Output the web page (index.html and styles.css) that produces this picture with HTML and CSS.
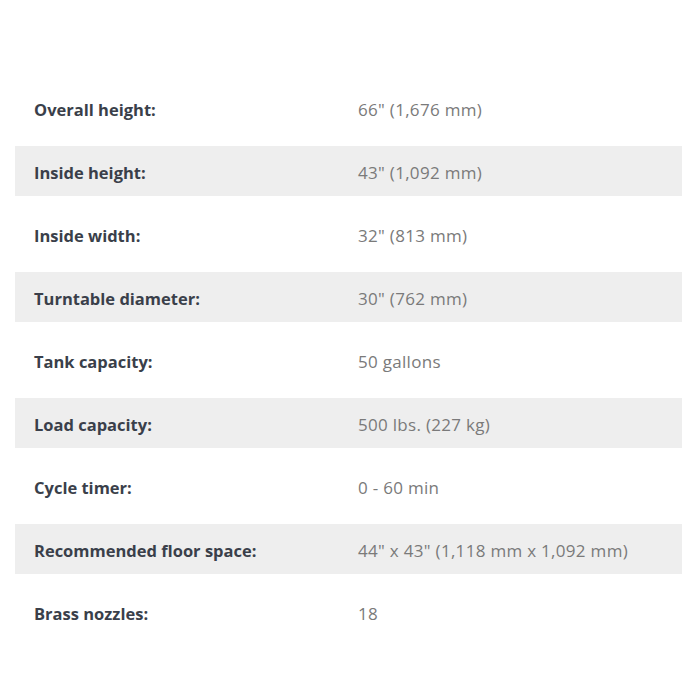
FILE: index.html
```html
<!DOCTYPE html>
<html>
<head>
<meta charset="utf-8">
<link rel="stylesheet" href="styles.css">
</head>
<body>
<div class="specs">
  <div class="row"><div class="label">Overall height:</div><div class="value">66" (1,676 mm)</div></div>
  <div class="row alt"><div class="label">Inside height:</div><div class="value">43" (1,092 mm)</div></div>
  <div class="row"><div class="label">Inside width:</div><div class="value">32" (813 mm)</div></div>
  <div class="row alt"><div class="label">Turntable diameter:</div><div class="value">30" (762 mm)</div></div>
  <div class="row"><div class="label">Tank capacity:</div><div class="value">50 gallons</div></div>
  <div class="row alt"><div class="label">Load capacity:</div><div class="value">500 lbs. (227 kg)</div></div>
  <div class="row"><div class="label">Cycle timer:</div><div class="value">0 - 60 min</div></div>
  <div class="row alt"><div class="label">Recommended floor space:</div><div class="value">44" x 43" (1,118 mm x 1,092 mm)</div></div>
  <div class="row"><div class="label">Brass nozzles:</div><div class="value">18</div></div>
</div>
</body>
</html>
```
FILE: styles.css
```css
html, body {
  margin: 0;
  padding: 0;
  background: #ffffff;
}
body {
  width: 700px;
  height: 700px;
}
.specs {
  display: flex;
  flex-direction: column;
  gap: 13px;
  padding: 83px 18px 0 15px;
}
.row {
  display: flex;
  align-items: center;
  height: 50px;
  padding-left: 19px;
}
.row.alt {
  background: #eeeeee;
}
.label {
  width: 324px;
  padding-top: 2px;
  font-family: "Open Sans", sans-serif;
  font-weight: 700;
  font-size: 16.5px;
  color: #3a3f4a;
}
.value {
  padding-top: 2px;
  font-family: "Open Sans", sans-serif;
  font-weight: 400;
  font-size: 17px;
  letter-spacing: 0.3px;
  color: #7a7a7a;
}
```
